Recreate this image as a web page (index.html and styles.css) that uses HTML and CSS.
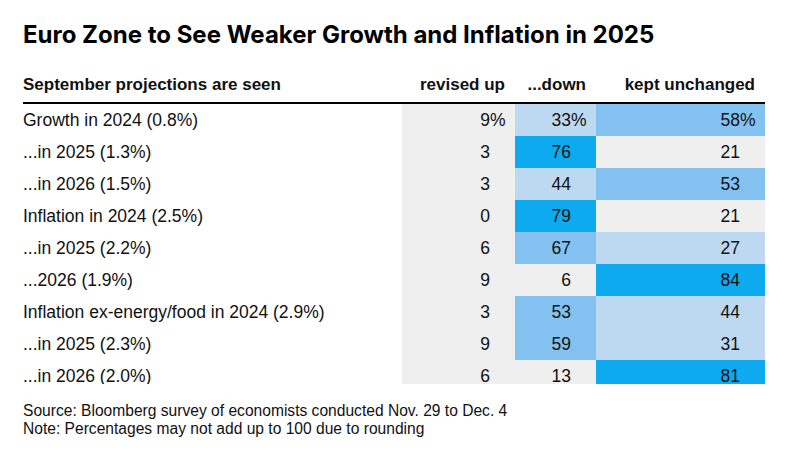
FILE: index.html
```html
<!DOCTYPE html>
<html lang="en">
<head>
<meta charset="utf-8">
<title>Euro Zone to See Weaker Growth and Inflation in 2025</title>
<link rel="stylesheet" href="styles.css">
</head>
<body>
<div class="chart">
  <h1 class="title">Euro Zone to See Weaker Growth and Inflation in 2025</h1>
  <div class="table-wrap">
    <table class="data">
      <colgroup>
        <col class="c-label"><col class="c-up"><col class="c-down"><col class="c-kept">
      </colgroup>
      <thead>
        <tr>
          <th class="h-label">September projections are seen</th>
          <th class="h-num">revised up</th>
          <th class="h-num">...down</th>
          <th class="h-num">kept unchanged</th>
        </tr>
      </thead>
      <tbody>
        <tr><td class="label">Growth in 2024 (0.8%)</td><td class="num grey">9<span class="unit">%</span></td><td class="num light">33<span class="unit">%</span></td><td class="num mid">58<span class="unit">%</span></td></tr>
        <tr><td class="label">...in 2025 (1.3%)</td><td class="num grey">3</td><td class="num strong">76</td><td class="num grey">21</td></tr>
        <tr><td class="label">...in 2026 (1.5%)</td><td class="num grey">3</td><td class="num light">44</td><td class="num mid">53</td></tr>
        <tr><td class="label">Inflation in 2024 (2.5%)</td><td class="num grey">0</td><td class="num strong">79</td><td class="num grey">21</td></tr>
        <tr><td class="label">...in 2025 (2.2%)</td><td class="num grey">6</td><td class="num mid">67</td><td class="num light">27</td></tr>
        <tr><td class="label">...2026 (1.9%)</td><td class="num grey">9</td><td class="num grey">6</td><td class="num strong">84</td></tr>
        <tr><td class="label">Inflation ex-energy/food in 2024 (2.9%)</td><td class="num grey">3</td><td class="num mid">53</td><td class="num light">44</td></tr>
        <tr><td class="label">...in 2025 (2.3%)</td><td class="num grey">9</td><td class="num mid">59</td><td class="num light">31</td></tr>
        <tr><td class="label">...in 2026 (2.0%)</td><td class="num grey">6</td><td class="num grey">13</td><td class="num strong">81</td></tr>
      </tbody>
    </table>
  </div>
  <div class="notes">
    <p>Source: Bloomberg survey of economists conducted Nov. 29 to Dec. 4</p>
    <p>Note: Percentages may not add up to 100 due to rounding</p>
  </div>
</div>
</body>
</html>
```
FILE: styles.css
```css
html, body {
  margin: 0;
  padding: 0;
  background: #ffffff;
}
body {
  font-family: "Liberation Sans", Arial, sans-serif;
  color: #111111;
}
.chart {
  width: 742px;
  padding: 21px 0 0 23px;
}
.title {
  margin: 0 0 26px 0;
  font-family: Inter, "Liberation Sans", sans-serif;
  font-weight: 700;
  font-size: 24px;
  line-height: 28px;
  color: #000000;
  white-space: nowrap;
}
.table-wrap {
  height: 309px;
  overflow: hidden;
}
.data {
  width: 742px;
  table-layout: fixed;
  border-collapse: collapse;
  border-spacing: 0;
}
.c-label { width: 379px; }
.c-up { width: 113px; }
.c-down { width: 81px; }
.c-kept { width: 169px; }
.data th {
  font-weight: 700;
  font-size: 17px;
  line-height: 20px;
  padding: 0 0 7px 0;
  border-bottom: 2px solid #000000;
  color: #111111;
  white-space: nowrap;
}
.h-label { text-align: left; }
.h-num { text-align: right; padding-right: 10px !important; }
.data td {
  height: 32px;
  padding: 0;
  font-size: 17.5px;
  line-height: 32px;
  white-space: nowrap;
  vertical-align: top;
}
.data td.label { text-align: left; }
.data td.num { text-align: right; padding-right: 25px; }
.unit {
  display: inline-block;
  width: 0;
}
.grey { background: #efefef; }
.light { background: #bdd9f1; }
.mid { background: #83c1f1; }
.strong { background: #0daaf0; }
.notes {
  margin-top: 18px;
  font-size: 15.6px;
  line-height: 18px;
  color: #111111;
}
.notes p { margin: 0; }
```
